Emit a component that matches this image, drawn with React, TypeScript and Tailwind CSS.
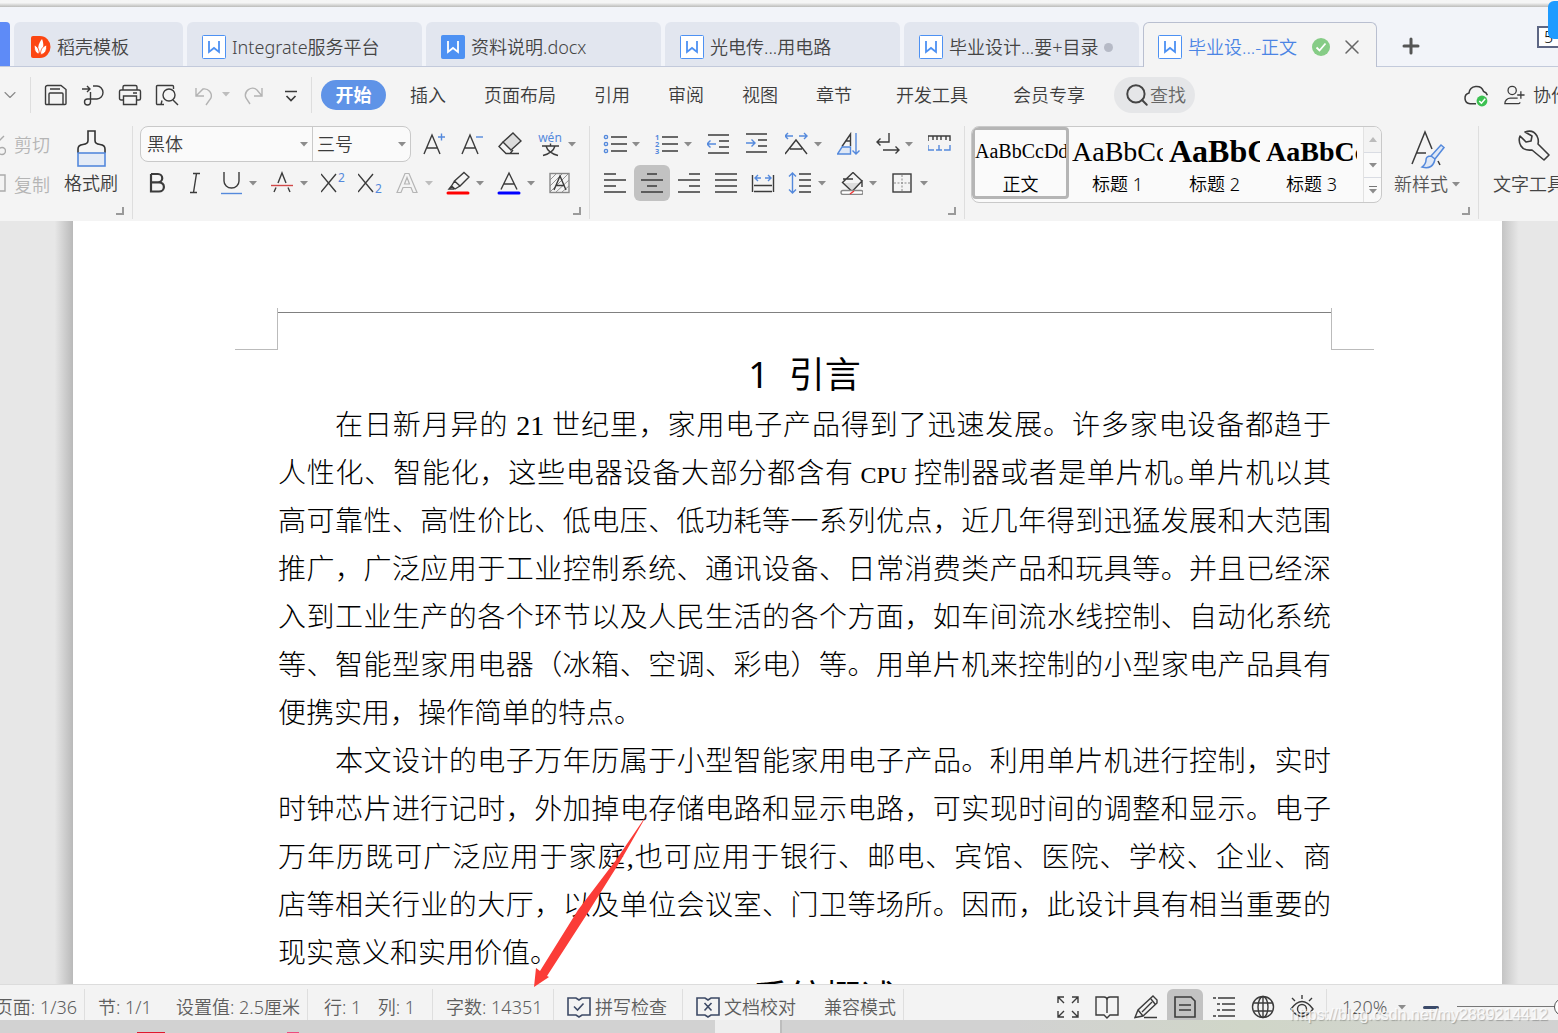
import type { ReactNode } from 'react'
import { ChevronDown, Plus, Search, X } from 'lucide-react'
import clsx from 'clsx'

const DARK = '#3b3b3b'
const BLUE = '#5489dc'

function Icon({ children, size = 24, stroke = DARK, label }: {
  children: ReactNode
  size?: number
  stroke?: string
  label?: string
}) {
  return (
    <svg
      width={size}
      height={size}
      viewBox="0 0 24 24"
      fill="none"
      stroke={stroke}
      strokeWidth={1.4}
      aria-label={label}
      className="shrink-0"
    >
      {children}
    </svg>
  )
}

function Caret({ faded = false }: { faded?: boolean }) {
  return (
    <svg width="8" height="5" viewBox="0 0 8 5" className="shrink-0">
      <path d="M0 0h8L4 4.5z" fill={faded ? '#bdbdbd' : '#8c8c8c'} />
    </svg>
  )
}

function Tool({ label, caret, faded, active, tight, children }: {
  label: string
  caret?: boolean
  faded?: boolean
  active?: boolean
  tight?: boolean
  children: ReactNode
}) {
  return (
    <button
      title={label}
      aria-label={label}
      className={clsx(
        'flex shrink-0 items-center',
        tight ? 'gap-[5px]' : 'gap-1.5',
        active && '-m-1.5 rounded-md bg-[#c2c2c2] p-1.5'
      )}
    >
      {children}
      {caret && <Caret faded={faded} />}
    </button>
  )
}

function Divider({ className }: { className?: string }) {
  return <span className={clsx('w-px shrink-0 bg-[#dedede]', className)} />
}

function Launcher() {
  return (
    <button aria-label="更多设置" className="absolute right-2 bottom-1.5 size-2 border-r-2 border-b-2 border-[#9a9a9a]" />
  )
}

/* ---------- document tabs ---------- */

function WpsIcon({ filled = false }: { filled?: boolean }) {
  return (
    <svg width="24" height="24" viewBox="0 0 24 24" fill="none" className="shrink-0">
      <rect x="0.5" y="0.5" width="23" height="23" rx="1" fill={filled ? '#4d91f3' : '#fff'} stroke="#4d91f3" />
      <path d="M7 6v11l5-4 5 4V6" stroke={filled ? '#fff' : '#4d91f3'} strokeWidth="1.8" />
    </svg>
  )
}

function DocerIcon() {
  return (
    <svg width="20" height="24" viewBox="0 0 20 24" className="shrink-0">
      <path d="M2 1h7a10.5 11 0 0 1 0 22H2a2 2 0 0 1-2-2V3a2 2 0 0 1 2-2z" fill="#fc4612" />
      <path d="M9 18C6 14 7 9 11 4c2 5 2 10-2 14z" fill="#fff" />
      <path d="M8 19c-4-1-5-5-4.500-9C7 12 8.500 15 8 19zM9.500 19.500c0-5 2-8 6-9.500.5 5-1 9-6 9.500z" fill="#fff" stroke="#fc4612" strokeWidth="0.8" />
    </svg>
  )
}

const docTabs = [
  { title: 'Integrate服务平台' },
  { title: '资料说明.docx', filled: true },
  { title: '光电传...用电路' },
  { title: '毕业设计...要+目录', dirty: true },
]

function TabBar() {
  return (
    <div role="tablist" className="relative flex h-[60px] shrink-0 items-end gap-1 border-b border-[#c3cadb] bg-[#f2f4f9] text-lg text-[#444]">
      <button aria-label="首页" className="h-11 w-2.5 shrink-0 rounded-tr bg-[#5e8bf7]" />
      <button role="tab" className="flex h-11 w-[169px] shrink-0 items-center gap-1.5 rounded-t-md bg-[#e2e6ef] pt-1.5 pl-[17px]">
        <DocerIcon />
        稻壳模板
      </button>
      {docTabs.map(t => (
        <button key={t.title} role="tab" className="flex h-11 w-[235px] shrink-0 items-center gap-1.5 rounded-t-md bg-[#e2e6ef] pt-1.5 pl-[15px] whitespace-nowrap">
          <WpsIcon filled={t.filled} />
          {t.title}
          {t.dirty && <span className="size-[9px] rounded-full bg-[#b6bac6]" />}
        </button>
      ))}
      <div className="-mb-px flex h-[45px] w-[234px] shrink-0 items-center gap-1.5 rounded-t-md border border-b-0 border-[#b9bfd0] bg-[#f4f4f4] pt-1 pr-3 pl-3.5">
        <WpsIcon />
        <button role="tab" aria-selected="true" className="whitespace-nowrap text-[#4b84e4]">毕业设...-正文</button>
        <svg width="18" height="18" viewBox="0 0 18 18" fill="none" className="ml-auto shrink-0">
          <circle cx="9" cy="9" r="9" fill="#86cc86" />
          <path d="M4.500 9.500l3 3 6-7" stroke="#fff" strokeWidth="1.8" />
        </svg>
        <button aria-label="关闭" className="ml-1"><X size={24} strokeWidth={1.5} className="text-[#666]" /></button>
      </div>
      <button aria-label="新建" className="mb-2 ml-[18px]"><Plus size={24} strokeWidth={3} className="text-[#555]" /></button>

      {/* window list, partly under a floating widget */}
      <button className="absolute top-[19px] right-0 h-[22px] w-[21px] border-2 border-r-0 border-[#5d6684] bg-white text-center text-base leading-[18px] text-black">5</button>
      <div className="absolute -top-1.5 right-0 h-[38px] w-2.5 rounded-l-md bg-[#1e9bff]" />
    </div>
  )
}

/* ---------- menu row ---------- */

const menuTabs = ['插入', '页面布局', '引用', '审阅', '视图', '章节']

function MenuRow() {
  return (
    <div className="flex h-[57px] shrink-0 items-center overflow-hidden pb-0.5 text-lg whitespace-nowrap text-[#3c3c3c]">
      <button aria-label="展开" className="shrink-0"><ChevronDown size={20} strokeWidth={1.3} className="text-[#888]" /></button>
      <Divider className="ml-2.5 h-9" />
      <div className="ml-[13px] flex items-center gap-[13px]">
        <Tool label="保存">
          <Icon>
            <path d="M4 2.500h13l5 4V20.500a1 1 0 0 1-1 1H2.500a1 1 0 0 1-1-1V4.500a2 2 0 0 1 2-2z" />
            <path d="M5 21.500V11a1 1 0 0 1 1-1h12a1 1 0 0 1 1 1v10.500M6 6h10" />
          </Icon>
        </Tool>
        <Tool label="输出为PDF">
          <Icon>
            <path d="M1 6h8M6 3l3 3-3 3M12 3h4a6 6.500 0 0 1 0 13H6.500a3 3 0 1 0 3 3V9" />
          </Icon>
        </Tool>
        <Tool label="打印">
          <Icon>
            <path d="M5 7V4a1.500 1.500 0 0 1 1.500-1.500h11A1.500 1.500 0 0 1 19 4v3M5 17H3a1.500 1.500 0 0 1-1.500-1.500v-7A1.500 1.500 0 0 1 3 7h18a1.500 1.500 0 0 1 1.500 1.500v7A1.500 1.500 0 0 1 21 17h-2" />
            <path d="M5.500 13h13v8.500h-13zM15 10h4" />
          </Icon>
        </Tool>
        <Tool label="打印预览">
          <Icon>
            <path d="M9 21.500H2.500a1 1 0 0 1-1-1v-17a1 1 0 0 1 1-1h15a1 1 0 0 1 1 1V6M7 17.500l-1 4" />
            <circle cx="14" cy="12" r="6" />
            <path d="M18 17l5 5" />
          </Icon>
        </Tool>
        <Tool label="撤销" caret faded>
          <Icon stroke="#b3b3b3">
            <path d="M4 5v8h8M4 13l7-7a7 7 0 0 1 8 9l-5 7" />
          </Icon>
        </Tool>
        <Tool label="恢复">
          <Icon stroke="#b3b3b3">
            <path d="M19 5v8h-8M19 13l-5-6a7 7 0 0 0-11 8l4 6" />
          </Icon>
        </Tool>
      </div>
      <button aria-label="自定义快速访问工具栏" className="ml-3 shrink-0">
        <Icon><path d="M6 8.500h12M7.500 13l4.500 4.500 4.500-4.500" strokeWidth="1.700" /></Icon>
      </button>
      <Divider className="ml-2 h-9" />
      <button className="ml-[9px] h-[30px] w-[65px] shrink-0 rounded-full bg-[#5f93e7] font-bold text-white">开始</button>
      <div className="ml-6 flex gap-[38px]">
        {menuTabs.map(t => <button key={t}>{t}</button>)}
      </div>
      <button className="ml-11">开发工具</button>
      <button className="ml-[45px]">会员专享</button>
      <label className="ml-[29px] flex h-9 w-[81px] shrink-0 items-center rounded-full bg-[#e5e6e8] pl-2.5">
        <Search size={26} strokeWidth={1.8} className="shrink-0 text-[#444]" />
        <input aria-label="查找" placeholder="查找" className="w-10 bg-transparent outline-none placeholder:text-[#666]" />
      </label>
      <div className="-mr-[11px] ml-auto flex shrink-0 items-center">
        <button aria-label="云同步">
          <Icon size={26}>
            <path d="M12 20H6.500a5 5 0 0 1-1-9.800 7 7 0 0 1 13.500-1.500 5 5 0 0 1 3.500 3.500" />
            <circle cx="17.500" cy="17.500" r="5" fill="#3cc152" stroke="none" />
            <path d="M15 17.500l2 2 3.500-4" stroke="#fff" />
          </Icon>
        </button>
        <button className="ml-3.5 flex items-center gap-2">
          <Icon size={22}>
            <circle cx="10" cy="7" r="4.500" />
            <path d="M16 15.500H8a6 6 0 0 0-6 6h15a1.500 1.500 0 0 0 1.500-1.500M15.500 12h8M19.500 8v8" />
          </Icon>
          协作
        </button>
      </div>
    </div>
  )
}

/* ---------- ribbon ---------- */

function ClipboardGroup() {
  return (
    <div className="relative flex w-[132px] shrink-0 overflow-hidden">
      <div className="-ml-[18px] flex w-[68px] flex-col gap-3.5 pt-1.5 text-[#b5b5b5]">
        <button className="flex items-center gap-2 whitespace-nowrap">
          <Icon stroke="#aaa">
            <path d="M8 17L22 3M16 11l-6-8" />
            <circle cx="20" cy="18" r="3.500" />
          </Icon>
          剪切
        </button>
        <button className="flex items-center gap-2 whitespace-nowrap">
          <Icon stroke="#aaa"><path d="M4 2h19v16h-6v4H4" /></Icon>
          复制
        </button>
      </div>
      <button className="ml-3.5 flex h-[72px] w-[54px] flex-col items-center whitespace-nowrap">
        <svg width="30" height="44" viewBox="0 0 30 44" fill="none">
          <path d="M2 27v-4q0-4 5-4.500 5-.5 5-4V5h7v9.500q0 3.500 5 4 5 .5 5 4.500v4" stroke="#333" strokeWidth="1.600" />
          <rect x="2" y="27" width="27" height="13" fill="#e4ebf6" stroke={BLUE} strokeWidth="1.600" />
        </svg>
        格式刷
      </button>
      <Launcher />
    </div>
  )
}

function FontGroup() {
  return (
    <div className="relative w-[456px] shrink-0 pl-[7px]">
      <div className="flex h-9 items-center gap-3.5">
        <div className="-mr-[3px] flex h-9 w-[271px] rounded-lg border border-[#c9c9c9] bg-[#fafafa]">
          <label className="flex w-[172px] items-center border-r border-[#c9c9c9] pr-1">
            <select aria-label="字体" className="h-full flex-1 appearance-none bg-transparent pl-1.5 outline-none">
              <option>黑体</option>
              <option>宋体</option>
            </select>
            <Caret />
          </label>
          <label className="flex flex-1 items-center pr-1">
            <select aria-label="字号" className="h-full flex-1 appearance-none bg-transparent pl-1 outline-none">
              <option>三号</option>
              <option>四号</option>
            </select>
            <Caret />
          </label>
        </div>
        <Tool label="增大字号">
          <Icon><path d="M2 22L10 3l8 19M5 16h10" /><path d="M16 5h7M19.500 1.500v7" stroke={BLUE} /></Icon>
        </Tool>
        <Tool label="减小字号">
          <Icon><path d="M2 22L10 3l8 19M5 16h10" /><path d="M16 5h7" stroke={BLUE} /></Icon>
        </Tool>
        <Tool label="清除格式">
          <Icon>
            <path d="M15 1l8 8-10 9-8-8z" fill="#dcdcdc" />
            <path d="M5 10l-4 4.500 7 7h4l3-3.500M8 21.500h13" />
          </Icon>
        </Tool>
        <button aria-label="拼音指南" className="flex items-center gap-1">
          <svg width="28" height="28" viewBox="0 0 28 28" fill="none">
            <text x="14" y="12" textAnchor="middle" fontSize="12" fontWeight="400" fill={BLUE}>wén</text>
            <path d="M6 16h17M14.500 13.500V16M10 16q2 7 12 9.500M19 16q-2 7-12 9.500" stroke={DARK} strokeWidth="1.400" />
          </svg>
          <Caret />
        </button>
      </div>
      <div className="mt-[3px] flex h-9 items-center gap-[13px] pl-[5px]">
        <Tool label="加粗">
          <Icon><path d="M6 3v17.500h8a4.800 4.500 0 0 0 0-9.200H6M6 3h7a4.200 4.100 0 0 1 0 8.300" strokeWidth="2.200" /></Icon>
        </Tool>
        <Tool label="倾斜"><Icon><path d="M11 2.500h7M8 21.500h7M14.500 2.500l-3 19" /></Icon></Tool>
        <Tool label="下划线" caret>
          <Icon><path d="M5 1v9a7.500 7 0 0 0 15 0V1" /><path d="M2 22.500h21" stroke={BLUE} /></Icon>
        </Tool>
        <Tool label="删除线" caret>
          <Icon><path d="M8 12l4-10 4 10M4 21l2-4.500M20 21l-2-4.500" /><path d="M1 14.500h22" stroke="#d04848" /></Icon>
        </Tool>
        <Tool label="上标">
          <Icon>
            <path d="M0 3l15 18M15 3L0 21" />
            <text x="17" y="11" fontSize="12" fontWeight="400" fill={BLUE} stroke="none">2</text>
          </Icon>
        </Tool>
        <Tool label="下标">
          <Icon>
            <path d="M0 3l15 18M15 3L0 21" />
            <text x="17" y="22" fontSize="12" fontWeight="400" fill={BLUE} stroke="none">2</text>
          </Icon>
        </Tool>
        <Tool label="文字效果" caret faded>
          <Icon stroke="#b5b5b5"><path d="M2 21.500L10 2.500h4l8 19h-4l-2-5H8l-2 5zM9.500 13h5L12 6.500z" strokeWidth="1.200" /></Icon>
        </Tool>
        <Tool label="突出显示" caret>
          <Icon>
            <path d="M18 1.500l5 4.500L14 15l-5.500-5zM8.500 10l-3 5 3.500 3 5-3M5.500 15l-2.500 3h5" />
            <path d="M2 22h20" stroke="#f00" strokeWidth="3" strokeLinecap="round" />
          </Icon>
        </Tool>
        <Tool label="字体颜色" caret>
          <Icon>
            <path d="M4 18.500L12 2l8 16.500M7 13h10" />
            <path d="M2 22h20" stroke="#00f" strokeWidth="3" strokeLinecap="round" />
          </Icon>
        </Tool>
        <Tool label="字符底纹">
          <Icon stroke="#888">
            <rect x="2" y="2.500" width="19" height="19" />
            <path d="M2 9l6-6M2 15L14 3M2 21L20 3M8 21L21 9M14 21l7-6" strokeWidth="0.900" />
            <path d="M6 19L12 5l6 14M8 14.500h8" stroke={DARK} />
          </Icon>
        </Tool>
      </div>
      <Launcher />
    </div>
  )
}

function ParagraphGroup() {
  return (
    <div className="relative w-[374px] shrink-0 pl-[13px]">
      <div className="flex h-9 items-center gap-[15px]">
        <Tool label="项目符号" caret tight>
          <Icon>
            <path d="M8 5h16M8 12h16M8 19h16" />
            <g stroke={BLUE}><circle cx="3" cy="5" r="1.600" /><circle cx="3" cy="12" r="1.600" /><circle cx="3" cy="19" r="1.600" /></g>
          </Icon>
        </Tool>
        <Tool label="编号" caret tight>
          <Icon>
            <path d="M7 5h16M7 12h16M7 19h16" />
            <g fill={BLUE} stroke="none" fontSize="7.500" fontWeight="700">
              <text x="0" y="7.500">1</text><text x="0" y="14.500">2</text><text x="0" y="22">3</text>
            </g>
          </Icon>
        </Tool>
        <Tool label="减少缩进">
          <Icon><path d="M1 3h21M12 9h10M12 15h10M1 21h21" /><path d="M9 12H0M3.500 8.500L0 12l3.500 3.500" stroke={BLUE} /></Icon>
        </Tool>
        <Tool label="增加缩进">
          <Icon><path d="M0 2h21M12 8h9M12 14h9M0 20h21" /><path d="M0 11h9M5.500 7.500L9 11l-3.500 3.500" stroke={BLUE} /></Icon>
        </Tool>
        <Tool label="中文版式" caret tight>
          <Icon><path d="M0 22L11 8l11 14M5 17h12" /><path d="M8 4H0M3 1L0 4l3 3M14 4h8M19 1l3 3-3 3" stroke={BLUE} /></Icon>
        </Tool>
        <Tool label="排序">
          <Icon>
            <path d="M5 14.500L13.500 2v12M9 9h4" />
            <path d="M5 15h8.500v7H0.500z" fill="#dfe8f6" stroke={BLUE} />
            <path d="M19 1v21M15.500 18.500L19 22l3.500-3.500" stroke={BLUE} />
          </Icon>
        </Tool>
        <Tool label="换行" caret tight>
          <Icon><path d="M13 1v9H1M4.500 6.500L1 10l3.500 3.500M7 18h16M19.500 14.500L23 18l-3.500 3.500" /></Icon>
        </Tool>
        <Tool label="制表位">
          <Icon><path d="M0 9V4h22v5M5 4v4M9 4v4M13 4v4M18 4v4" /><path d="M0 13v5h6M22 13v5h-6M8 18h6M11 13v5" stroke={BLUE} /></Icon>
        </Tool>
      </div>
      <div className="mt-[3px] flex h-9 items-center gap-[13px]">
        <Tool label="左对齐"><Icon><path d="M1 3h12M1 9h22M1 15h12M1 21h22" /></Icon></Tool>
        <Tool label="居中对齐" active><Icon><path d="M7 3h10M1 9h22M7 15h10M1 21h22" /></Icon></Tool>
        <Tool label="右对齐"><Icon><path d="M12 3h11M1 9h22M12 15h11M1 21h22" /></Icon></Tool>
        <Tool label="两端对齐"><Icon><path d="M1 3h22M1 9h22M1 15h22M1 21h22" /></Icon></Tool>
        <Tool label="分散对齐">
          <Icon><path d="M1.500 4v17M22.500 4v17M3 14.500h18M3 20.500h18" /><path d="M10 7H4M7 4L4 7l3 3M14 7h6M17 4l3 3-3 3" stroke={BLUE} /></Icon>
        </Tool>
        <Tool label="行距" caret>
          <Icon><path d="M11 3h12M11 9h12M11 15h12M11 21h12" /><path d="M4.500 2v20M1 5.500L4.500 2 8 5.500M1 18.500L4.500 22 8 18.500" stroke={BLUE} /></Icon>
        </Tool>
        <Tool label="底纹颜色" caret>
          <Icon>
            <path d="M4 12h17l-8 8z" fill="#ddd" stroke="none" />
            <path d="M14 1.500L3.500 11.500 12 19.500M14 1.500l9 8.500-9 9.500M4 8h10M23 9v7" />
            <rect x="2" y="19.500" width="22" height="4" rx="2" fill="#fff" stroke="#888" />
            <path d="M11 23l4-3" stroke="#e33" />
          </Icon>
        </Tool>
        <Tool label="边框" caret>
          <Icon><rect x="3" y="3" width="18" height="18" /><path d="M12 4v17M4 12h17" stroke="#888" strokeDasharray="2 1.500" strokeWidth="1" /></Icon>
        </Tool>
      </div>
      <Launcher />
    </div>
  )
}

const styles = [
  { name: '正文', preview: 'AaBbCcDd', className: 'text-xl' },
  { name: '标题 1', preview: 'AaBbCcDd', className: 'text-[28px]' },
  { name: '标题 2', preview: 'AaBbCcDd', className: 'text-[32px] font-bold' },
  { name: '标题 3', preview: 'AaBbCcDd', className: 'text-[28px] font-bold' },
]

function StylesGroup() {
  return (
    <div className="relative flex w-[513px] shrink-0 pl-1.5">
      <div className="flex h-[77px] w-[411px] shrink-0 overflow-hidden rounded-lg border border-[#c9c9c9] bg-[#fafafa]">
        {styles.map((s, i) => (
          <button
            key={s.name}
            className={clsx(
              'flex h-[72px] w-[97px] flex-col rounded border-[3px] text-black',
              i === 0 ? 'border-[#b5b5b5]' : 'border-transparent'
            )}
          >
            <span className={clsx('block h-[43px] w-full overflow-hidden text-left font-["Liberation_Serif",serif] leading-[43px] whitespace-nowrap', s.className)}>
              {s.preview}
            </span>
            <span className="w-full text-center leading-[22px]">{s.name}</span>
          </button>
        ))}
        <div className="ml-auto flex w-[18px] flex-col border-l border-[#e2e2e2]">
          <button aria-label="上一行" className="flex h-[25px] items-center justify-center bg-[#f3f3f3]">
            <svg width="8" height="5" viewBox="0 0 8 5"><path d="M0 5h8L4 0z" fill="#bbb" /></svg>
          </button>
          <button aria-label="下一行" className="flex h-[26px] items-center justify-center border-y border-[#d9dce3]"><Caret /></button>
          <button aria-label="更多样式" className="flex flex-1 flex-col items-center justify-center gap-0.5">
            <span className="h-px w-2 bg-[#777]" />
            <Caret />
          </button>
        </div>
      </div>
      <button className="ml-3 flex h-[72px] flex-col items-start whitespace-nowrap text-[#555]">
        <svg width="66" height="45" viewBox="0 0 66 45" fill="none" stroke={DARK} strokeWidth="1.500">
          <path d="M18 38L31 6l7 17M23 27h9M44 35l2 4" />
          <path d="M37 30l10-11 3 2.500-9 11.500M37 30q-5 0-5 4 0 4-4 7 11 3 13-8z" fill="#dfe8f6" stroke={BLUE} />
        </svg>
        <span className="flex items-center gap-1">新样式<Caret /></span>
      </button>
      <Launcher />
    </div>
  )
}

function Ribbon() {
  return (
    <div className="flex h-[97px] shrink-0 overflow-hidden pt-0.5 text-lg leading-[26px] text-[#3c3c3c]">
      <ClipboardGroup />
      <Divider className="h-[93px]" />
      <FontGroup />
      <Divider className="h-[93px]" />
      <ParagraphGroup />
      <Divider className="h-[93px]" />
      <StylesGroup />
      <Divider className="h-[93px]" />
      <button className="ml-3.5 flex h-[72px] w-20 shrink-0 flex-col items-start whitespace-nowrap text-[#444]">
        <svg width="80" height="45" viewBox="0 0 80 45" fill="none">
          <path d="M32 6q8-3 12 4 2 4 1 8l11 11-5 5-12-10q-8 1-11-4-3-5-1-10l6 6 5-1 1-5z" stroke={DARK} strokeWidth="1.600" strokeLinejoin="round" />
        </svg>
        文字工具
      </button>
    </div>
  )
}

/* ---------- document ---------- */

function Line({ children, indent, last }: { children: ReactNode; indent?: boolean; last?: boolean }) {
  return (
    <span className={clsx('block whitespace-nowrap', indent && 'pl-[57px]', !last && '[text-align-last:justify]')}>
      {children}
    </span>
  )
}

function Document() {
  return (
    <main className="flex min-h-0 flex-1 overflow-hidden bg-[#e7e7e7]">
      <div className="w-[73px] shrink-0 bg-linear-to-r from-transparent from-75% to-[#b9b9b9]" />
      <article className="min-w-0 flex-1 bg-white pt-[87px] pr-[171px] pl-[205px] text-black">
        <div className="-mx-[43px] flex h-[42px]">
          <div className="w-[43px] border-r border-b border-[#bbb]" />
          <div className="mt-1 flex-1 border-t border-[#808080]" />
          <div className="w-[43px] border-b border-l border-[#bbb]" />
        </div>
        <h1 className="flex h-[52px] justify-center gap-5 text-4xl leading-[49px] font-normal">
          <span>1</span>
          <span>引言</span>
        </h1>
        <div className='font-["Liberation_Serif","Noto_Sans_CJK_SC",serif] text-[28px] leading-[48px] font-light'>
          <p>
            <Line indent>在日新月异的 21 世纪里，家用电子产品得到了迅速发展。许多家电设备都趋于</Line>
            <Line>
              人性化、智能化，这些电器设备大部分都含有<span className="text-2xl"> CPU </span>控制器或者是单片机
              <span className="[font-feature-settings:'halt']">。</span>单片机以其
            </Line>
            <Line>高可靠性、高性价比、低电压、低功耗等一系列优点，近几年得到迅猛发展和大范围</Line>
            <Line>推广，广泛应用于工业控制系统、通讯设备、日常消费类产品和玩具等。并且已经深</Line>
            <Line>入到工业生产的各个环节以及人民生活的各个方面，如车间流水线控制、自动化系统</Line>
            <Line>等、智能型家用电器（冰箱、空调、彩电）等。用单片机来控制的小型家电产品具有</Line>
            <Line last>便携实用，操作简单的特点。</Line>
          </p>
          <p>
            <Line indent>本文设计的电子万年历属于小型智能家用电子产品。利用单片机进行控制，实时</Line>
            <Line>时钟芯片进行记时，外加掉电存储电路和显示电路，可实现时间的调整和显示。电子</Line>
            <Line>万年历既可广泛应用于家庭,也可应用于银行、邮电、宾馆、医院、学校、企业、商</Line>
            <Line>店等相关行业的大厅，以及单位会议室、门卫等场所。因而，此设计具有相当重要的</Line>
            <Line last>现实意义和实用价值。</Line>
          </p>
        </div>
        <h1 className="flex justify-center gap-5 text-4xl leading-[40px] font-normal">
          <span>2</span>
          <span>系统概述</span>
        </h1>
      </article>
      <div className="w-14 shrink-0 bg-linear-to-l from-transparent from-70% to-[#c4c4c4]" />
    </main>
  )
}

/* ---------- status bar ---------- */

function StatusBar() {
  return (
    <footer className="flex h-9 shrink-0 overflow-hidden border-t border-[#dcdcdc] bg-[#f3f3f3] pt-1 text-lg leading-9 whitespace-nowrap text-[#5e5e5e]">
      <span className="flex w-[84px] shrink-0 justify-end pr-[7px]">页面: 1/36</span>
      <Divider />
      <span className="flex w-[222px] shrink-0 justify-between pr-[7px] pl-[13px]">
        <span>节: 1/1</span>
        <span>设置值: 2.5厘米</span>
      </span>
      <Divider />
      <span className="flex w-[124px] shrink-0 justify-between pr-[17px] pl-4">
        <span>行: 1</span>
        <span>列: 1</span>
      </span>
      <Divider />
      <button className="flex w-[120px] shrink-0 pl-[13px]">字数: 14351</button>
      <Divider />
      <button className="flex h-9 w-32 shrink-0 items-center gap-1 pl-[13px]">
        <Icon stroke="#3d4a66"><path d="M1 3h8l3 2 3-2h8v17h-8l-3 2-3-2H1zM7 11.500l3.500 3.500 6-6.500" strokeWidth="1.600" /></Icon>
        拼写检查
      </button>
      <Divider />
      <span className="flex h-9 w-[220px] shrink-0 items-center justify-between pr-[7px] pl-[13px]">
        <button className="flex items-center gap-1">
          <Icon stroke="#3d4a66"><path d="M1 3h8l3 2 3-2h8v17h-8l-3 2-3-2H1zM8.500 8l7 7.500M15.500 8l-7 7.500" strokeWidth="1.600" /></Icon>
          文档校对
        </button>
        <span>兼容模式</span>
      </span>
      <Divider />

      <div className="-mr-[110px] ml-auto flex shrink-0">
        <div className="flex h-9 items-center gap-[15px] pr-3">
          <Tool label="全屏显示">
            <Icon><path d="M2 8V2h6M16 2h6v6M22 16v6h-6M8 22H2v-6M2 2l6 6M22 2l-6 6M22 22l-6-6M2 22l6-6" /></Icon>
          </Tool>
          <Tool label="阅读版式">
            <Icon><path d="M1 2h8q3 0 3 3 0-3 3-3h8v18h-8l-3 3-3-3H1zM12 5v13" /></Icon>
          </Tool>
          <Tool label="写作模式">
            <Icon><path d="M19 1l4 4v3L9 21l-8 1.500L4 15zM4 15l5 6M17 4l4 5M8 17L18 7M10 22.500h13" /></Icon>
          </Tool>
          <Tool label="页面视图" active>
            <Icon><path d="M2 2h16l4 4v16H2zM6 10h12M6 15h12" strokeWidth="1.600" /></Icon>
          </Tool>
          <Tool label="大纲">
            <Icon><path d="M1 3h3M6 3h17M5 9h3M10 9h13M5 15h3M10 15h13M1 21h3M6 21h17" /></Icon>
          </Tool>
          <Tool label="Web版式">
            <Icon><circle cx="12" cy="12" r="10.500" /><ellipse cx="12" cy="12" rx="5" ry="10.500" /><path d="M12 1.500v21M2.500 8h19M2.500 16h19" /></Icon>
          </Tool>
          <Tool label="护眼模式">
            <Icon><path d="M1 14q11-15 22 0-11 15-22 0zM12 0v4M2 3l3 3M22 3l-3 3" /><circle cx="12" cy="14" r="4.500" /></Icon>
          </Tool>
        </div>
        <Divider />
        <button className="flex h-9 w-[79px] items-center justify-between pl-[15px]">
          120%
          <Caret />
        </button>
        <button aria-label="缩小" className="ml-[17px] flex h-9 items-center"><span className="h-[3px] w-4 rounded bg-[#3b4a69]" /></button>
        <input
          type="range"
          aria-label="显示比例"
          defaultValue={50}
          className="mt-[17px] ml-[18px] h-px w-[211px] appearance-none bg-[#777] [&::-webkit-slider-thumb]:size-[18px] [&::-webkit-slider-thumb]:appearance-none [&::-webkit-slider-thumb]:rounded-full [&::-webkit-slider-thumb]:border [&::-webkit-slider-thumb]:border-[#555] [&::-webkit-slider-thumb]:bg-white"
        />
      </div>
    </footer>
  )
}

function Taskbar() {
  return (
    <div className="relative flex h-[13px] shrink-0 bg-linear-to-r from-[#d2d2d2] from-65% via-[#d0d6c8] via-80% to-[#d2d2d2] pl-[715px]">
      <div className="w-[67px] border-r-2 border-[#bdbdbd] bg-[#eee]" />
      {/* tops of the taskbar icons */}
      <span className="absolute bottom-0 left-[137px] h-px w-7 bg-[#e0182d]" />
      <span className="absolute bottom-0 left-[287px] h-px w-3 bg-[#ee4a7c]" />
    </div>
  )
}

export default function App() {
  return (
    <div className='relative flex h-screen flex-col overflow-hidden bg-[#f4f4f4] font-["Noto_Sans","Noto_Sans_CJK_SC",sans-serif] font-[350]'>
      <div className="h-[7px] shrink-0 bg-linear-to-b from-[#f5f5f5] from-40% to-[#bcbcba]" />
      <TabBar />
      <MenuRow />
      <Ribbon />
      <Document />
      <StatusBar />
      <Taskbar />

      {/* pointer to the word count */}
      <svg width="118" height="176" viewBox="0 0 118 176" className="absolute bottom-[45px] left-[532px]">
        <path d="M116 1L89 48 57 99 15 164l2 1L2 175l2-19 4 3L46 98 84 48z" fill="#fb3c37" />
      </svg>
      <span className='absolute right-2.5 bottom-2 font-["Liberation_Sans",sans-serif] text-base leading-5 font-normal text-white/80 [text-shadow:1px_1px_1px_rgba(0,0,0,0.25)]'>
        https://blog.csdn.net/my2889214412
      </span>
    </div>
  )
}
